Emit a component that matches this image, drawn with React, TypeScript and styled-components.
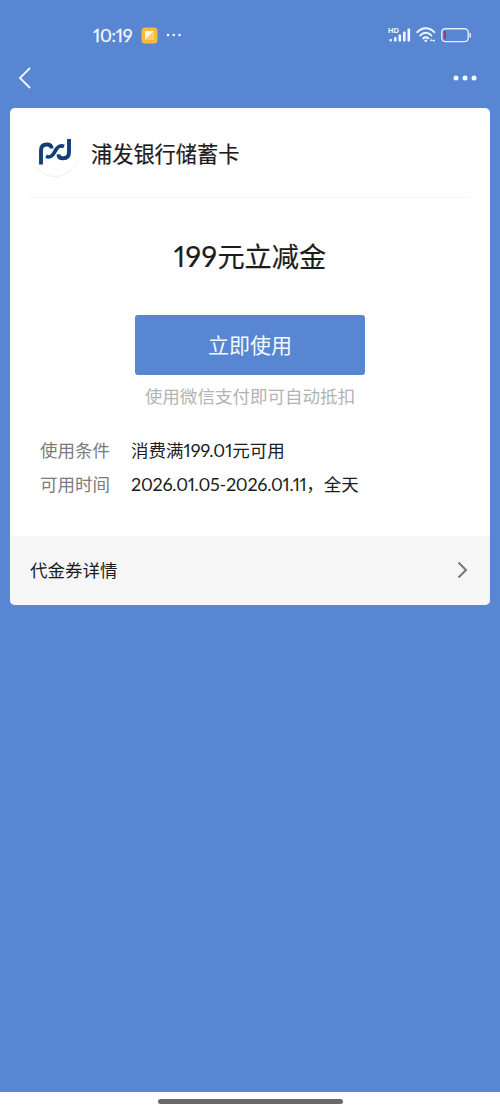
import React from 'react';
import styled, { createGlobalStyle } from 'styled-components';

const BLUE = '#5886d2';

const GlobalStyle = createGlobalStyle`
  * { box-sizing: border-box; }
  body {
    margin: 0;
    background: ${BLUE};
    font-family: "Noto Sans CJK SC", sans-serif;
    color: #1c1c1c;
  }
`;

const Screen = styled.div`
  width: 500px;
  height: 1111px;
  display: flex;
  flex-direction: column;
  background: ${BLUE};
`;

const StatusBar = styled.header`
  height: 54px;
  padding: 15px 28px 0 93px;
  display: flex;
  justify-content: space-between;
  color: #eef8ff;
`;

const StatusGroup = styled.div<{ $gap: number }>`
  height: 40px;
  display: flex;
  align-items: center;
  gap: ${p => p.$gap}px;
`;

const Clock = styled.span`
  width: 41px;
  font: 400 18px/24px Lato, sans-serif;
  font-variant-numeric: proportional-nums;
  letter-spacing: -0.2px;
  white-space: nowrap;
  -webkit-text-stroke: 0.3px currentColor;
`;

const NavBar = styled.nav`
  height: 54px;
  padding: 0 23px 6px 18px;
  display: flex;
  align-items: center;
  justify-content: space-between;
`;

const IconButton = styled.button`
  display: flex;
  padding: 0;
  border: 0;
  background: none;
`;

const Card = styled.main`
  height: 497px;
  margin: 0 10px;
  border-radius: 5px;
  overflow: hidden;
  display: flex;
  flex-direction: column;
  background: #fff;
`;

const Issuer = styled.div`
  height: 90px;
  margin: 0 20px;
  padding-left: 1px;
  border-bottom: 1px solid #f5f5f5;
  display: flex;
  align-items: center;
  gap: 12px;
`;

const Logo = styled.div`
  width: 48px;
  height: 48px;
  border-radius: 50%;
  box-shadow: inset 0 -1px 1px #efefef;
  display: flex;
  align-items: center;
  justify-content: center;
`;

const IssuerName = styled.div`
  font-size: 21.2px;
  line-height: 30px;
  -webkit-text-stroke: 0.2px currentColor;
`;

const Amount = styled.h1`
  margin: 37px 0 0;
  font-size: 27.2px;
  line-height: 40px;
  font-weight: 400;
  text-align: center;
  -webkit-text-stroke: 0.2px currentColor;
`;

const Digits = styled.span<{ $size: number; $spacing: number }>`
  font-family: Lato, sans-serif;
  font-variant-numeric: proportional-nums;
  font-size: ${p => p.$size}px;
  letter-spacing: ${p => p.$spacing}px;
`;

const UseButton = styled.button`
  width: 230px;
  height: 60px;
  margin: 39px auto 0;
  padding: 0 0 2px;
  border: 0;
  border-radius: 3px;
  background: ${BLUE};
  color: #f4faff;
  font: 400 21px/58px "Noto Sans CJK SC", sans-serif;
`;

const Hint = styled.p`
  margin: 9px 0 0;
  color: #b3b3b3;
  font-size: 17.55px;
  line-height: 24px;
  text-align: center;
`;

const Terms = styled.dl`
  margin: 25px 30px 0;
  display: grid;
  grid-template-columns: 91px 1fr;
  grid-auto-rows: 34px;
  align-items: center;
  font-size: 17.5px;
  line-height: 26px;
`;

const Label = styled.dt`
  color: #7b7b7b;
`;

const Value = styled.dd`
  margin: 0;
  white-space: nowrap;
`;

const Details = styled.div`
  height: 69px;
  margin-top: auto;
  padding: 0 22px 1px 20px;
  display: flex;
  align-items: center;
  justify-content: space-between;
  background: #f6f6f6;
  font-size: 17.5px;
`;

const DetailsTitle = styled.span`
  padding-bottom: 2px;
`;

const HomeArea = styled.footer`
  height: 19px;
  margin-top: auto;
  display: flex;
  justify-content: center;
  padding-top: 7px;
  background: #fff;
`;

const HomeIndicator = styled.div`
  width: 185px;
  height: 5px;
  border-radius: 3px;
  background: #69696b;
`;

const NoteIcon = () => (
  <svg width="17" height="17" viewBox="0 0 17 17">
    <rect x=".5" y=".5" width="16" height="16" rx="3.5" fill="#f9b93f" />
    <path d="M4 4h9L4 13z" fill="#fff4d5" />
    <path d="M13 4v9H4z" fill="#fbcf76" />
  </svg>
);

const Dots = ({ r, step }: { r: number; step: number }) => (
  <svg width={2 * step + 6} height="6" fill="#f2fbff">
    {[0, 1, 2].map(i => <circle key={i} cx={3 + i * step} cy="3" r={r} />)}
  </svg>
);

const HdText = styled.text`
  font: 700 7.5px "Liberation Sans", sans-serif;
`;

const SignalIcon = () => (
  <svg width="25" height="18" viewBox="0 0 25 18" fill="#eef8ff">
    <HdText x="0" y="6.5">HD</HdText>
    <rect x="1.500" y="13" width="2.400" height="2.500" rx=".8" />
    <rect x="6" y="11" width="2.500" height="4.500" rx=".8" />
    <rect x="10.500" y="8.500" width="2.600" height="7" rx=".8" />
    <rect x="15" y="5.500" width="2.600" height="10" rx=".8" />
    <rect x="19.500" y="2.500" width="2.600" height="13" rx=".8" />
  </svg>
);

const WifiIcon = () => (
  <svg width="22" height="18" viewBox="0 0 22 18" fill="none" stroke="#eef8ff" strokeWidth="2" strokeLinecap="round">
    <path d="M1.300 6.200C6 .9 13.500 .9 18.300 6.200" />
    <path d="M4.300 9.400C7.500 6 12 6 15.300 9.400" />
    <path d="M7.300 12.300C8.700 10.900 10.900 10.900 12.300 12.300" />
    <circle cx="9.800" cy="14.700" r="1.300" fill="#eef8ff" stroke="none" />
    <path d="M14.500 14.500h4M15 12.800v2M18 13.800v2" strokeWidth=".8" />
  </svg>
);

const BatteryIcon = () => (
  <svg width="31" height="15" viewBox="0 0 31 15" fill="none">
    <rect x=".8" y=".8" width="26.400" height="12.800" rx="3.500" stroke="#e2f0ff" strokeWidth="1.400" />
    <rect x="2.800" y="3" width="2.200" height="8.400" rx=".8" fill="#9c3e6c" />
    <path d="M29.200 5.500v3.500" stroke="#e2f0ff" strokeWidth="1.500" strokeLinecap="round" />
  </svg>
);

const BankLogo = () => (
  <svg width="34" height="30" viewBox="0 0 34 30" fill="none" stroke="#123f76" strokeWidth="3.900">
    <path d="M3 26.500V12.500C3 8.600 5.200 6.500 8.800 6.500C11.800 6.500 13.500 8 13.600 10.500" />
    <path d="M8 18.300C12.300 20.200 14.500 18.200 17 13.400C19.500 8.600 21.700 6.600 26 8.500" strokeWidth="3.700" />
    <path d="M31 1V14.300C31 18.200 28.800 20.300 25.200 20.300C22.200 20.300 20.500 18.800 20.400 16.300" />
  </svg>
);

export default function App() {
  return (
    <>
      <GlobalStyle />
      <Screen>
        <StatusBar>
          <StatusGroup $gap={7}>
            <Clock>10:19</Clock>
            <NoteIcon />
            <Dots r={1.3} step={5.8} />
          </StatusGroup>
          <StatusGroup $gap={3}>
            <SignalIcon />
            <WifiIcon />
            <BatteryIcon />
          </StatusGroup>
        </StatusBar>
        <NavBar>
          <IconButton aria-label="返回">
            <svg width="13" height="22" viewBox="0 0 13 22" fill="none" stroke="#e4f5ff" strokeWidth="2">
              <path d="M12 1 2 11l10 10" />
            </svg>
          </IconButton>
          <IconButton aria-label="更多">
            <Dots r={2.5} step={9} />
          </IconButton>
        </NavBar>
        <Card>
          <Issuer>
            <Logo><BankLogo /></Logo>
            <IssuerName>浦发银行储蓄卡</IssuerName>
          </Issuer>
          <Amount><Digits $size={28.5} $spacing={0.4}>199</Digits>元立减金</Amount>
          <UseButton>立即使用</UseButton>
          <Hint>使用微信支付即可自动抵扣</Hint>
          <Terms>
            <Label>使用条件</Label>
            <Value>消费满<Digits $size={18} $spacing={0}>199.01</Digits>元可用</Value>
            <Label>可用时间</Label>
            <Value><Digits $size={18} $spacing={-0.27}>2026.01.05-2026.01.11</Digits>，全天</Value>
          </Terms>
          <Details>
            <DetailsTitle>代金券详情</DetailsTitle>
            <svg width="11" height="18" viewBox="0 0 11 18" fill="none" stroke="#777" strokeWidth="2">
              <path d="m1.500 1.500 7.500 7.500-7.500 7.500" />
            </svg>
          </Details>
        </Card>
        <HomeArea><HomeIndicator /></HomeArea>
      </Screen>
    </>
  );
}
